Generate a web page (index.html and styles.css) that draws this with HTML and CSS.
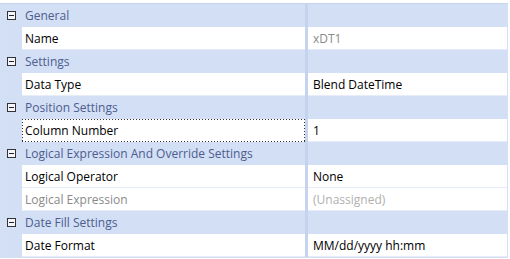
FILE: index.html
```html
<!DOCTYPE html>
<html lang="en">
<head>
<meta charset="UTF-8">
<title>Property Grid</title>
<link rel="stylesheet" href="styles.css">
</head>
<body>
<div class="grid">
    <div class="row category">
        <div class="gutter"><span class="toggle"></span></div>
        <div class="name">General</div>
        <div class="split"></div>
        <div class="value"></div>
    </div>
    <div class="row">
        <div class="gutter"></div>
        <div class="name">Name</div>
        <div class="split"></div>
        <div class="value muted">xDT1</div>
    </div>
    <div class="row category">
        <div class="gutter"><span class="toggle"></span></div>
        <div class="name">Settings</div>
        <div class="split"></div>
        <div class="value"></div>
    </div>
    <div class="row">
        <div class="gutter"></div>
        <div class="name">Data Type</div>
        <div class="split"></div>
        <div class="value">Blend DateTime</div>
    </div>
    <div class="row category">
        <div class="gutter"><span class="toggle"></span></div>
        <div class="name">Position Settings</div>
        <div class="split"></div>
        <div class="value"></div>
    </div>
    <div class="row">
        <div class="gutter"></div>
        <div class="name focused">Column Number</div>
        <div class="split"></div>
        <div class="value">1</div>
    </div>
    <div class="row category">
        <div class="gutter"><span class="toggle"></span></div>
        <div class="name">Logical Expression And Override Settings</div>
        <div class="split"></div>
        <div class="value"></div>
    </div>
    <div class="row">
        <div class="gutter"></div>
        <div class="name">Logical Operator</div>
        <div class="split"></div>
        <div class="value">None</div>
    </div>
    <div class="row">
        <div class="gutter"></div>
        <div class="name muted">Logical Expression</div>
        <div class="split"></div>
        <div class="value faint">(Unassigned)</div>
    </div>
    <div class="row category">
        <div class="gutter"><span class="toggle"></span></div>
        <div class="name">Date Fill Settings</div>
        <div class="split"></div>
        <div class="value"></div>
    </div>
    <div class="row">
        <div class="gutter"></div>
        <div class="name">Date Format</div>
        <div class="split"></div>
        <div class="value">MM/dd/yyyy hh:mm</div>
    </div>
</div>
</body>
</html>
```

FILE: styles.css
```css
* { margin: 0; padding: 0; box-sizing: border-box; }
body {
    background: #fff;
    font-family: 'Open Sans', 'Noto Sans', sans-serif;
    font-size: 12px;
    color: #000;
    padding: 3px 2px 0 0;
}
.grid {
    width: 508px;
    border: 1px solid #d6e0f4;
    border-top-color: #c7d3ec;
    background: #d3dff5;
}
.row {
    display: grid;
    grid-template-columns: 21px 283px 3px 1fr;
    height: 23px;
}
.row > div {
    display: flex;
    align-items: center;
}
.gutter {
    background: #d3dff5;
    justify-content: center;
}
.name {
    padding-left: 3px;
    background: #fff;
    border-bottom: 1px solid #e6ecf8;
}
.value {
    padding-left: 5px;
    background: #fff;
    border-bottom: 1px solid #e6ecf8;
}
.split {
    background: #c6d3ee;
}
.category .name,
.category .value {
    background: #d3dff5;
    border-bottom: none;
    color: #4c5d8e;
}
.name.focused {
    border-bottom: none;
    background:
        repeating-linear-gradient(90deg, #333 0 1px, transparent 1px 3px) top / 100% 1px no-repeat,
        repeating-linear-gradient(90deg, #333 0 1px, transparent 1px 3px) bottom / 100% 1px no-repeat,
        repeating-linear-gradient(180deg, #333 0 1px, transparent 1px 3px) left / 1px 100% no-repeat,
        repeating-linear-gradient(180deg, #333 0 1px, transparent 1px 3px) right / 1px 100% no-repeat,
        #fff;
}
.muted { color: #8a8a8a; }
.faint { color: #b0b0b0; }
.toggle {
    width: 9px;
    height: 9px;
    border: 1px solid #333;
    position: relative;
    background: #f4f6fb;
}
.toggle::after {
    content: '';
    position: absolute;
    left: 1px;
    right: 1px;
    top: 3px;
    height: 1px;
    background: #222;
}
```
